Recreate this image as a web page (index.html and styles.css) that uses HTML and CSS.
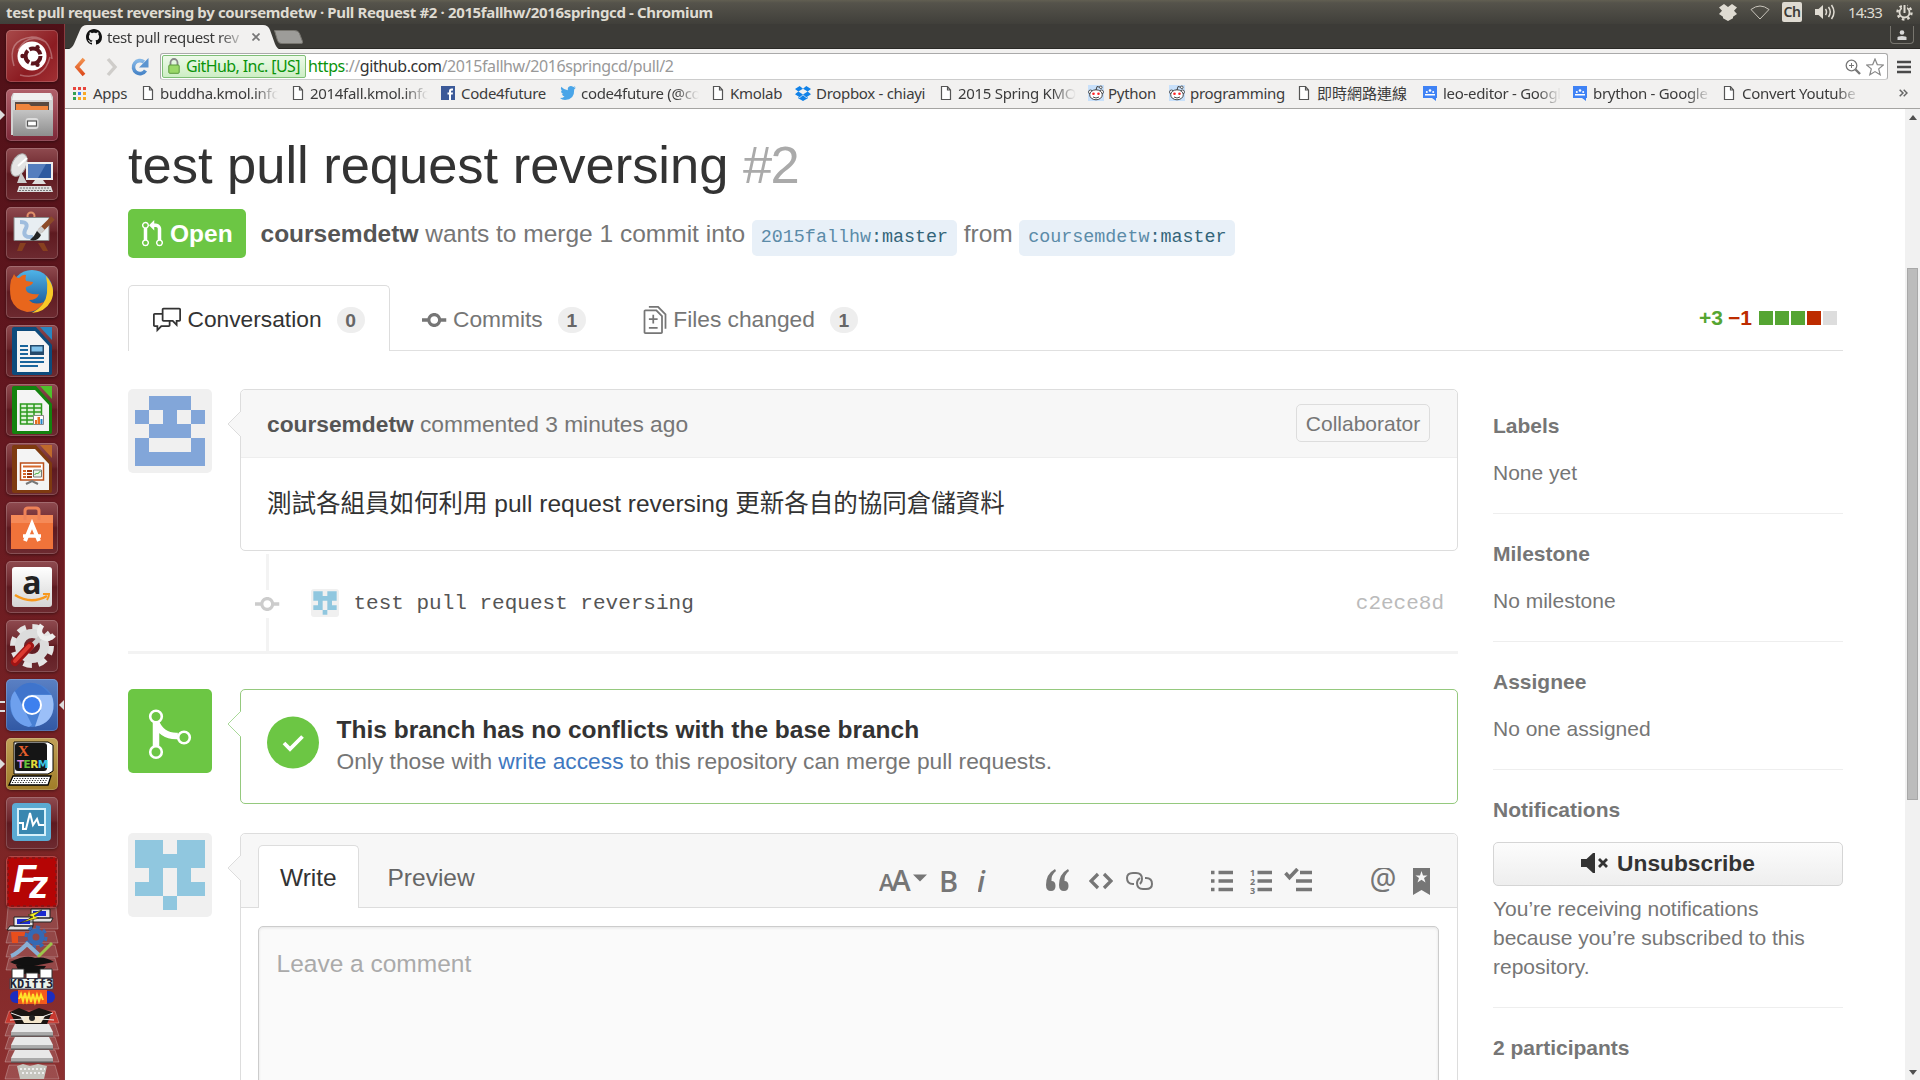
FILE: index.html
```html
<!DOCTYPE html>
<html lang="en">
<head>
<meta charset="utf-8">
<title>test pull request reversing by coursemdetw · Pull Request #2 · 2015fallhw/2016springcd</title>
<link rel="stylesheet" href="styles.css">
</head>
<body>
<svg class="defs" width="0" height="0">
  <defs>
    <linearGradient id="shine" x1="0" y1="0" x2="0" y2="1"><stop offset="0" stop-color="#fff"/><stop offset="1" stop-color="#d5d5d5"/></linearGradient>
    <linearGradient id="steel" x1="0" y1="0" x2="0" y2="1"><stop offset="0" stop-color="#c4c4c4"/><stop offset="1" stop-color="#8e8e8e"/></linearGradient>
    <linearGradient id="blueball" x1="0" y1="0" x2="0" y2="1"><stop offset="0" stop-color="#4fb4e8"/><stop offset="1" stop-color="#134a8e"/></linearGradient>
    <linearGradient id="reloadg" x1="0" y1="0" x2="0" y2="1"><stop offset="0" stop-color="#85b7e6"/><stop offset="1" stop-color="#4a86c8"/></linearGradient>
    <linearGradient id="backg" x1="0" y1="0" x2="0" y2="1"><stop offset="0" stop-color="#f2924f"/><stop offset="1" stop-color="#dc4a1c"/></linearGradient>
    <symbol id="doc" viewBox="0 0 12 16"><path d="M1.500 1.500h6l3 3.500v9.500h-9zM7.500 1.500V5h3" fill="#fff" stroke="#555" stroke-width="1.200"/></symbol>
    <symbol id="reddit" viewBox="0 0 16 16"><path fill="#c8e0fa" d="M0 0h16v16H0z"/><circle cx="2.500" cy="7" r="2" fill="#fff" stroke="#333" stroke-width=".8"/><circle cx="13.500" cy="7" r="2" fill="#fff" stroke="#333" stroke-width=".8"/><ellipse cx="8" cy="9.800" rx="6.300" ry="5" fill="#fff" stroke="#333" stroke-width=".9"/><circle cx="5.500" cy="8.700" r="1.300" fill="#f22"/><circle cx="10.500" cy="8.700" r="1.300" fill="#f22"/><path d="M5 12q3 2 6 0M8 5l1-3.500 3 .8" fill="none" stroke="#333" stroke-width=".9"/><circle cx="12.800" cy="2.300" r="1.300" fill="#fff" stroke="#333" stroke-width=".8"/></symbol>
    <symbol id="groups" viewBox="0 0 14 16"><path fill="#3f82f5" d="M0 1h14v12h-1v3l-4-3H0z"/><path d="M2 9h10v1.500H2z" fill="#fff"/><circle cx="7" cy="5.500" r="1.300" fill="#fff"/><circle cx="3.800" cy="7" r="1" fill="#fff"/><circle cx="10.200" cy="7" r="1" fill="#fff"/></symbol>
    <symbol id="commit" viewBox="0 0 14 16"><path d="M10.860 7c-.45-1.720-2-3-3.860-3-1.860 0-3.410 1.280-3.860 3H0v2h3.140c.45 1.720 2 3 3.860 3 1.860 0 3.410-1.280 3.860-3H14V7h-3.140zM7 10.200c-1.220 0-2.200-.98-2.200-2.200 0-1.220.98-2.200 2.200-2.200 1.220 0 2.200.98 2.200 2.200 0 1.220-.98 2.200-2.200 2.200z"/></symbol>
    <symbol id="teal" viewBox="0 0 84 84"><path fill="#f0f0f0" d="M0 0h84v84H0z"/><path fill="#90c7df" d="M7 7h28v14h14V7h28v28H63v14h14v14H49V35H35v28H7V49h14V35H7zM35 63h14v14H35z"/></symbol>
    <symbol id="drive" viewBox="0 0 44 14"><path fill="#e8e8e8" d="M5 0h34l4 8H1z"/><path fill="#aaa" d="M1 8h42v4H1z"/><path fill="#555" d="M1 11.500h42v1.200H1z"/></symbol>
  </defs>
</svg>

<header class="titlebar">
  <span class="window-title">test pull request reversing by coursemdetw · Pull Request #2 · 2015fallhw/2016springcd - Chromium</span>
  <div class="indicators">
    <svg class="ind-dropbox" width="18" height="17" viewBox="0 0 18 17" fill="#dfdbd2"><path d="M5 0l4 3 4-3 5 3.500-3 3.200 3 3.300-4 2.800v1.500L9 17l-5-2.700v-1.500L0 10l3-3.300-3-3.200z"/></svg>
    <svg class="ind-wifi" width="20" height="15" viewBox="0 0 20 15" fill="none" stroke="#c9c5bc"><path d="M1 4.500Q10-2.500 19 4.500L10 14z"/></svg>
    <span class="ind-ime">Ch</span>
    <svg class="ind-sound" width="21" height="18" viewBox="0 0 21 18"><path fill="#dfdbd2" d="M0 6h3.500L8 2v14l-4.500-4H0z"/><path fill="none" stroke="#dfdbd2" stroke-width="1.500" d="M10.500 6q2 3 0 6M13.500 4q3.500 5 0 10M16.500 2q5 7 0 14"/></svg>
    <span class="clock">14:33</span>
    <svg class="ind-gear" width="17" height="17" viewBox="0 0 17 17" fill="none" stroke="#dfdbd2"><circle cx="8.500" cy="8.500" r="5" stroke-width="1.800"/><circle cx="8.500" cy="8.500" r="7" stroke-width="2.400" stroke-dasharray="2.600 2.900"/><path d="M8.500 0v8" stroke="#504e47" stroke-width="5"/><path d="M8.500 1v8" stroke-width="2"/></svg>
  </div>
</header>

<div class="desktop">
  <nav class="launcher">
    <div class="tile tile-dash"><svg viewBox="0 0 52 52"><g fill="none" stroke="#fff" stroke-opacity=".3" stroke-width="1.500"><path d="M8 36Q0 10 26 7q18 0 20 22M14 45q24 6 30-18M12 20Q22 2 40 12"/></g><circle cx="26" cy="26" r="14.500" fill="#fff"/><circle cx="27" cy="26" r="7.500" fill="none" stroke="#5c141c" stroke-width="4" stroke-dasharray="13.700 2"/><g fill="#5c141c"><circle cx="16.500" cy="26" r="2.200"/><circle cx="31.500" cy="17.200" r="2.200"/><circle cx="31.500" cy="34.800" r="2.200"/></g></svg></div>
    <div class="tile tile-pink running"><svg viewBox="0 0 52 52"><path fill="#d2d2d2" d="M7 4h38l2 4v38H5V8z"/><path fill="#f0f0f0" d="M8 4h36l2 7H6z"/><path fill="#5a4a40" d="M9 13h34v9H9z"/><path fill="#f0853c" d="M10 15h13l2 2h17v5H10z"/><path fill="url(#steel)" d="M7 21h40v26H7z"/><rect x="19.500" y="29" width="13" height="11" rx="3" fill="#ddd"/><rect x="21.500" y="32" width="9" height="5" fill="#fff" stroke="#555" stroke-width="1.200"/></svg></div>
    <div class="tile"><svg viewBox="0 0 52 52"><ellipse cx="13" cy="17" rx="7" ry="12" transform="rotate(25 13 17)" fill="#e4e4e4" stroke="#aaa"/><path stroke="#fff" stroke-width="2" d="M12 18l9-8"/><path fill="#ccc" d="M15 24l6 11H11z"/><path fill="#eee" d="M20 14h27v18H20z"/><path fill="#2d5aa0" d="M22 16h23v14H22z"/><path fill="#7da2dc" d="M22 16h18l-8 14H22z" opacity=".5"/><path fill="#ddd" d="M29 32h8l3 4H26zM13 38h32l2 6H11z"/><path stroke="#777" stroke-dasharray="2 1" d="M14 40h30M13 42.500h32"/></svg></div>
    <div class="tile"><svg viewBox="0 0 52 52"><path fill="#87401f" d="M14 36h6l-4 8h-5zM32 36h6l4 8h-5z"/><circle cx="25" cy="9" r="3.500" fill="none" stroke="#e0906a" stroke-width="2"/><path fill="#e8eef2" stroke="#888" d="M8 10.500h35v23H8z"/><path d="M14 15q10 0 5 8-3 8 8 7" fill="none" stroke="#6e9cd0" stroke-width="4" opacity=".6"/><path stroke="#8c4b28" stroke-width="5" d="M47 11L34 24"/><path stroke="#ccc" stroke-width="5" d="M37 21l-5 5"/><path fill="#222" d="M31 24l4 4q-3 7-11 5 4-3 7-9z"/></svg></div>
    <div class="tile"><svg viewBox="0 0 52 52"><circle cx="26" cy="25" r="21" fill="url(#blueball)"/><path fill="#f9c927" d="M40 10q11 12 5 25-6 11-19 12 14-8 15-20 1-9-1-17z"/><path fill="#e8661c" d="M5 14q2-3 3-6 2 4 5 4 4-4 7-3-1 4 0 6l7 1q0 3-7 5-1 4 3 6 5 2 10 1-2 6-10 6 5 6 15 2-6 10-17 10-12-2-16-13-2-10 0-19z"/></svg></div>
    <div class="tile"><svg viewBox="0 0 52 52"><path fill="#0d4b7c" d="M8 2h22l16 18v28q0 2-2 2H8q-2 0-2-2V4q0-2 2-2z"/><path fill="#2a86c0" d="M34 2h12v13z"/><path fill="#f4f4f4" d="M11 6h18l14 15v26H11z"/><path stroke="#1a659c" stroke-width="1.900" d="M14 21h8M14 25h8M14 29h8M14 33h24M14 37h24M14 41h18"/><path fill="#234a6c" d="M24 20h14v10H24z"/><path fill="#7fc1ea" d="M25.500 21.500h11v5h-11z"/></svg></div>
    <div class="tile"><svg viewBox="0 0 52 52"><path fill="#14820e" d="M8 2h22l16 18v28q0 2-2 2H8q-2 0-2-2V4q0-2 2-2z"/><path fill="#4fc02c" d="M34 2h12v13z"/><path fill="#f4f4f4" d="M11 6h18l14 15v26H11z"/><path fill="#dff2d8" stroke="#2d9a1e" stroke-width="1.500" d="M14.500 20h21v20h-21zM14 24h22M14 28h22M14 32h22M14 36h22M21 20v20M28 20v20"/><path fill="#fff" stroke="#888" d="M27.500 31.500h10v9h-10z"/><path fill="#e56f1c" d="M29 36h2v4h-2z"/><path fill="#e56f1c" d="M31.500 33h2.500v7h-2.500z"/><path fill="#2585c8" d="M34.500 35h2v5h-2z"/></svg></div>
    <div class="tile"><svg viewBox="0 0 52 52"><path fill="#7e3a10" d="M8 2h22l16 18v28q0 2-2 2H8q-2 0-2-2V4q0-2 2-2z"/><path fill="#bf6a2c" d="M34 2h12v13z"/><path fill="#f4f4f4" d="M11 6h18l14 15v26H11z"/><path fill="#fff" stroke="#ba4f1a" stroke-width="1.500" d="M14.500 20h23v17h-23z"/><path stroke="#d6692c" stroke-width="2" d="M17 23.500h18M17 28h3M17 31h3M17 34h3"/><path stroke="#9c3a10" stroke-width="2" d="M21 28h5M21 31h5M21 34h5"/><path fill="#e8f4e8" stroke="#777" d="M27.500 27h8v7h-8z"/><path stroke="#2ea52a" fill="none" d="M28.500 32l2-2 1 1 3-3"/><path stroke="#777" stroke-width="2" fill="none" d="M20 41l6-3 6 3"/></svg></div>
    <div class="tile"><svg viewBox="0 0 52 52"><path fill="#f0733a" d="M5 13h42v34H5z"/><path fill="#f58a58" d="M5 13h42v8H5z"/><path fill="none" stroke="#ee8258" stroke-width="3" d="M19 18V9q0-3 3-3h8q3 0 3 3v9"/><path fill="none" stroke="#fff" stroke-width="4" d="M19 39l7-17 7 17"/><path stroke="#fff" stroke-width="3.500" d="M17 34h18"/></svg></div>
    <div class="tile"><svg viewBox="0 0 52 52"><rect x="6" y="6" width="40" height="40" rx="3" fill="url(#shine)"/><text x="26" y="33" text-anchor="middle" class="amazon-a">a</text><path fill="none" stroke="#f7981d" stroke-width="2.500" d="M9 34q16 10 32 1"/><path fill="none" stroke="#f7981d" stroke-width="2" d="M37 33h6q0 3-2 6"/></svg></div>
    <div class="tile"><svg viewBox="0 0 52 52"><circle cx="26" cy="26" r="18" fill="none" stroke="#e4e4e4" stroke-width="8" stroke-dasharray="8 6.100"/><circle cx="26" cy="26" r="12.500" fill="none" stroke="#dcdcdc" stroke-width="9"/><path d="M19 33L37 15" stroke="#ccc" stroke-width="5"/><path fill="none" stroke="#eee" stroke-width="5" d="M36 5q-5 7 0 12 6 4 12-2"/><path d="M9 42l15-16" stroke="#a01414" stroke-width="8" stroke-linecap="round"/><path d="M9 41l14-15" stroke="#dc3a30" stroke-width="4" stroke-linecap="round"/></svg></div>
    <div class="tile tile-blue running-many active"><svg viewBox="0 0 52 52"><circle cx="26" cy="26" r="22" fill="#4880d4"/><path fill="#6ea0ee" d="M4.500 22Q6 14 9 12l10 20 7 14-3 2Q4 44 4.500 22z"/><path fill="#9bbff8" d="M29 47.500Q48 44 47.500 25q-.5-6-2-9H26l9 14z"/><path fill="#3f74cc" d="M9 12Q25-6 44 15H26q-9 1-10 9z"/><circle cx="26" cy="26" r="10" fill="#fff"/><circle cx="26" cy="26" r="8" fill="#3d80ee"/></svg></div>
    <div class="tile tile-gold running"><svg viewBox="0 0 52 52"><path fill="#fff" stroke="#000" d="M8 4h34l5 3v26l-5 3H8z"/><rect x="9" y="5" width="32" height="28" rx="3" fill="#151515"/><path fill="#fff" stroke="#000" stroke-width="1.300" d="M7 38h38l-3 9H3z"/><path stroke="#222" stroke-dasharray="1.200 1.500" d="M8 40.500h34M7 42.500h34M6 44.500h34"/><text x="12" y="18" class="xterm-x">X</text><text x="11" y="29.500" class="xterm-t"><tspan fill="#e08ad6">T</tspan><tspan fill="#67c23c">E</tspan><tspan fill="#e2dc3c">R</tspan><tspan fill="#3cc6e6">M</tspan></text></svg></div>
    <div class="tile"><svg viewBox="0 0 52 52"><rect x="6" y="6" width="39" height="38" rx="4" fill="#5baad2"/><path fill="#3987b0" stroke="#d6f0fa" stroke-width="2" d="M12 12h27v26H12z"/><path fill="none" stroke="#fff" stroke-width="2" d="M13 26h4v6h3l4-16 3 12 4-6 2 6h5"/></svg></div>
    <div class="tile tile-fz"><svg viewBox="0 0 52 52"><rect x="2" y="2" width="48" height="48" fill="#b50505" stroke="#8c1414" stroke-width="2" stroke-dasharray="3 3"/><text x="7" y="36" class="fz">F<tspan dx="-7" dy="6">z</tspan></text></svg></div>
    <svg class="stack" width="64" height="174" viewBox="0 0 64 174">
      <g fill="#fff" fill-opacity=".14" stroke="#fff" stroke-opacity=".25"><path d="M8 0h48l2 22H6z"/><path d="M9 24h46l3 12H6zM9 38h46l3 12H6zM9 51h46l3 12H6z"/><path d="M9 104h46l4 12H5z" fill="#f04030" fill-opacity=".6"/><path d="M9 117h46l4 12H5zM9 130h46l4 12H5zM9 143h46l4 12H5zM9 158h46l4 14H5z"/></g>
      <path fill="#e6e6e6" stroke="#222" d="M31 2h19v9H31zM30 11h23l-2 4H28zM14 10h19v9H14zM10 19h23l-2 4H7z"/><path fill="#1b2bd0" d="M33 4h13v5H33zM17 12h13v5H17z"/><path fill="#f4ee20" stroke="#222" stroke-width=".6" d="M42 3L28 8l5 2-13 6 19-5-5-2z"/>
      <path fill="#e84e1c" d="M11 25h14v4h-7v7h-6z"/><circle cx="36" cy="30" r="6" fill="none" stroke="#3469b4" stroke-width="5"/><circle cx="36" cy="30" r="10" fill="none" stroke="#3469b4" stroke-width="3" stroke-dasharray="4 3.800"/>
      <path d="M11 49q6-2 16-12l12 11" fill="none" stroke="#8ab0d4" stroke-width="4"/><path stroke="#9cc44a" stroke-width="3" d="M52 36L38 50"/><path fill="#111" d="M10 55q16-8 25-4 10-2 19 4-16 3-25 5-12-1-19-5z"/>
      <path fill="#111" d="M16 58l30 1-6 8H20z"/><path fill="#fff" stroke="#333" d="M12 62h12v9H12zM26 66h12v6H26zM40 62h12v9H40z"/><path fill="#eaf2ea" stroke="#445" d="M10 71.500h43V82H10z"/><text x="31.500" y="81" text-anchor="middle" class="kdiff">KDiff3</text>
      <rect x="10" y="84" width="45" height="12" rx="6" fill="#1c2cc0"/><path fill="#f35a1c" d="M18 83h29v14H18z"/><path stroke="#ffe22a" stroke-width="2" fill="none" d="M19 92l2-5 2 7 2-8 2 8 2-7 2 8 2-8 2 8 2-7 2 6 2-6 2 5"/>
      <path fill="#1a1512" d="M10 105l9-4 10 4 10-4 13 4-5 12H16z"/><path fill="#f4e6cc" d="M20 109h25l-4 7H24z"/><path stroke="#eee" d="M11 106l14 5M53 106l-14 5M10 113l14-1M54 113l-14-1"/><circle cx="32" cy="111" r="3" fill="#222"/>
      <use href="#drive" x="9" y="117" width="46" height="14"/><use href="#drive" x="9" y="130" width="46" height="14"/><use href="#drive" x="9" y="143" width="46" height="14"/>
      <path fill="#c6c6bf" d="M17 159l6-2 7 2 8-2 9 2-3 13H20z"/><path stroke="#eee" stroke-dasharray="2 2" stroke-width="2" d="M20 162h25M22 166h22"/>
    </svg>
  </nav>

  <div class="browser">
    <div class="tabstrip">
      <svg class="tab-shape" width="245" height="25" viewBox="0 0 245 25"><path fill="#f2f1f0" d="M0 25q6-1 8-6l6-14q2-5 7-5h176q5 0 7 5l5 14q2 5 6 6z"/><path fill="#9d9c99" stroke="#77756f" d="M208.500 5.500h20q4 0 5 3l3 8q1 2-2 2h-19q-3 0-4-3z"/></svg>
      <div class="tab">
        <svg width="16" height="16" viewBox="0 0 16 16"><path fill="#111" d="M8 0C3.580 0 0 3.580 0 8c0 3.540 2.290 6.530 5.470 7.590.4.07.55-.17.55-.38 0-.19-.01-.82-.01-1.490-2.010.37-2.530-.49-2.690-.94-.09-.23-.48-.94-.82-1.130-.28-.15-.68-.52-.01-.53.63-.01 1.080.58 1.230.82.72 1.210 1.870.87 2.330.66.07-.52.28-.87.51-1.070-1.780-.2-3.640-.89-3.640-3.950 0-.87.31-1.590.82-2.150-.08-.2-.36-1.020.08-2.120 0 0 .67-.21 2.200.82.64-.18 1.320-.27 2-.27.68 0 1.360.09 2 .27 1.530-1.040 2.200-.82 2.200-.82.44 1.100.16 1.920.08 2.120.51.56.82 1.270.82 2.150 0 3.070-1.870 3.750-3.650 3.950.29.25.54.73.54 1.480 0 1.070-.01 1.930-.01 2.200 0 .21.15.46.55.38A8.013 8.013 0 0 0 16 8c0-4.420-3.580-8-8-8z"/></svg>
        <span class="tab-title">test pull request rev</span>
        <svg width="8" height="8" viewBox="0 0 8 8"><path d="M.5.5l7 7M7.500.5l-7 7" stroke="#777" stroke-width="1.700"/></svg>
      </div>
      <div class="profile"><svg width="10" height="10" viewBox="0 0 10 10" fill="#d8d8d8"><circle cx="5" cy="2.500" r="2.300"/><path d="M.5 10V7.500Q1 6 5 6t4.500 1.500V10z"/></svg></div>
    </div>

    <div class="toolbar">
      <svg class="nav-back" width="12" height="20" viewBox="0 0 12 20"><path d="M10 2L3 10l7 8" fill="none" stroke="url(#backg)" stroke-width="3.600"/></svg>
      <svg class="nav-fwd" width="12" height="20" viewBox="0 0 12 20"><path d="M2 2l7 8-7 8" fill="none" stroke="#cfcdca" stroke-width="3.400"/></svg>
      <svg class="nav-reload" width="18" height="20" viewBox="0 0 18 20"><path d="M14.500 13.500A6.500 6.500 0 1 1 13 5" fill="none" stroke="url(#reloadg)" stroke-width="3.600"/><path fill="#5a94d0" d="M17.500 1v9.500H8z"/></svg>
      <div class="omnibox">
        <div class="ev"><svg width="12" height="16" viewBox="0 0 12 16"><path d="M2.500 8V4.500a3.500 3.500 0 0 1 7 0V8" fill="none" stroke="#888" stroke-width="1.800"/><rect x=".8" y="7" width="10.400" height="8.300" rx="1" fill="#9ad868" stroke="#5a9a3c"/></svg><span>GitHub, Inc. [US]</span></div>
        <div class="url"><span class="scheme">https</span>://<span class="host">github.com</span>/2015fallhw/2016springcd/pull/2</div>
        <svg class="magnify" width="16" height="16" viewBox="0 0 16 16" fill="none" stroke="#777"><circle cx="6.500" cy="6.500" r="5.300" stroke-width="1.300"/><path d="M4 6.500h5M6.500 4v5"/><path d="M10.500 10.500l4.500 4.500" stroke-width="2.400"/></svg>
        <svg width="18" height="18" viewBox="0 0 18 18"><path d="M9 1l2.300 5.600 6 .4-4.600 3.900 1.500 5.900L9 13.600l-5.200 3.200 1.500-5.900L.7 7l6-.4z" fill="#fff" stroke="#888" stroke-width="1.200"/></svg>
      </div>
      <svg class="menu" width="14" height="14" viewBox="0 0 14 14"><path stroke="#4a4a4a" stroke-width="2.600" d="M0 2h14M0 7h14M0 12h14"/></svg>
    </div>

    <div class="bookmarks">
      <div class="bm bm-apps"><svg width="13" height="13" viewBox="0 0 13 13"><path fill="#e8453c" d="M0 0h3v3H0zM5 0h3v3H5zM10 0h3v3h-3z"/><path fill="#33a152" d="M0 5h3v3H0zM0 10h3v3H0z"/><path fill="#4285f4" d="M5 5h3v3H5z"/><path fill="#f9a825" d="M10 5h3v3h-3zM5 10h3v3H5zM10 10h3v3h-3z"/></svg><span>Apps</span></div>
      <div class="bm bm-buddha"><svg width="12" height="16"><use href="#doc"/></svg><span class="fade">buddha.kmol.info</span></div>
      <div class="bm bm-fall"><svg width="12" height="16"><use href="#doc"/></svg><span class="fade">2014fall.kmol.info</span></div>
      <div class="bm bm-code"><svg width="14" height="14" viewBox="0 0 14 14"><path fill="#3b5998" d="M0 0h14v14H0z"/><path fill="#fff" d="M8 14V8.500H6.500V6.500H8V5q0-2.500 2.500-2.500H12v2h-1q-1 0-1 1v1h2l-.3 2H10V14z"/></svg><span>Code4future</span></div>
      <div class="bm bm-twitter"><svg width="16" height="14" viewBox="0 0 16 14"><path fill="#4aa5e8" d="M0 12q3 0 4.500-1.500Q2.500 10 2 8h1.300Q.8 7 1 4.500l1.300.5Q0 3 1.200.8 4 4 7.800 4.200 7.300.5 10.700 0q1.600 0 2.600 1l2-.7-1.200 1.800 1.900-.5-1.800 2Q14.500 14 5 14q-3 0-5-2z"/></svg><span class="fade">code4future (@co</span></div>
      <div class="bm bm-kmolab"><svg width="12" height="16"><use href="#doc"/></svg><span>Kmolab</span></div>
      <div class="bm bm-dropbox"><svg width="16" height="15" viewBox="0 0 16 15" fill="#1182e8"><path d="M4.700 0L8 2.700 3.300 5.600 0 3zM11.300 0L16 3l-3.300 2.600L8 2.700zM3.300 5.600L8 8.500l-3.300 2.700L0 8.200zM12.700 5.600L16 8.200l-4.700 3L8 8.500zM8 9.300l3.300 2.700 1.500-1v1.200L8 15l-4.800-2.800V11l1.500 1z"/></svg><span>Dropbox - chiayi</span></div>
      <div class="bm bm-spring"><svg width="12" height="16"><use href="#doc"/></svg><span class="fade">2015 Spring KMO</span></div>
      <div class="bm bm-python"><svg width="16" height="16"><use href="#reddit"/></svg><span>Python</span></div>
      <div class="bm bm-prog"><svg width="16" height="16"><use href="#reddit"/></svg><span>programming</span></div>
      <div class="bm bm-cjk"><svg width="12" height="16"><use href="#doc"/></svg><span>即時網路連線</span></div>
      <div class="bm bm-leo"><svg width="14" height="16"><use href="#groups"/></svg><span class="fade">leo-editor - Googl</span></div>
      <div class="bm bm-bry"><svg width="14" height="16"><use href="#groups"/></svg><span class="fade">brython - Google</span></div>
      <div class="bm bm-conv"><svg width="12" height="16"><use href="#doc"/></svg><span class="fade">Convert Youtube</span></div>
      <svg class="more" width="9" height="8" viewBox="0 0 9 8"><path d="M.7.7L4 4 .7 7.300M4.700.7L8 4 4.700 7.300" fill="none" stroke="#666" stroke-width="1.500"/></svg>
    </div>

    <div class="viewport">
      <main class="page">
        <h1 class="pr-title">test pull request reversing <span>#2</span></h1>
        <div class="pr-meta">
          <div class="state"><svg width="21" height="28" viewBox="0 0 12 16" fill="#fff"><path d="M11 11.280V5c-.03-.78-.34-1.470-.94-2.060C9.460 2.350 8.780 2.030 8 2H7V0L4 3l3 3V4h1c.27.02.48.11.69.31.21.2.3.42.31.69v6.280A1.993 1.993 0 0 0 10 15a1.993 1.993 0 0 0 1-3.720zm-1 2.920c-.66 0-1.200-.55-1.200-1.200 0-.65.55-1.200 1.200-1.200.65 0 1.200.55 1.200 1.200 0 .65-.55 1.200-1.200 1.200zM4 3c0-1.110-.89-2-2-2a1.993 1.993 0 0 0-1 3.720v6.560A1.993 1.993 0 0 0 2 15a1.993 1.993 0 0 0 1-3.720V4.720c.59-.34 1-.98 1-1.720zm-.8 10c0 .66-.55 1.200-1.200 1.200-.65 0-1.200-.55-1.200-1.200 0-.65.55-1.200 1.200-1.200.65 0 1.200.55 1.200 1.200zM2 4.200C1.340 4.200.8 3.650.8 3c0-.65.55-1.200 1.200-1.200.65 0 1.200.55 1.200 1.200 0 .65-.55 1.200-1.200 1.200z"/></svg>Open</div>
          <p><b>coursemdetw</b> wants to merge 1 commit into <span class="ref"><i>2015fallhw</i>:master</span> from <span class="ref"><i>coursemdetw</i>:master</span></p>
        </div>

        <div class="tabs">
          <a class="pr-tab selected"><svg width="28" height="28" viewBox="0 0 16 16"><path d="M15 1H6c-.55 0-1 .45-1 1v2H1c-.55 0-1 .45-1 1v6c0 .55.45 1 1 1h1v3l3-3h4c.55 0 1-.45 1-1V9h1l3 3V9h1c.55 0 1-.45 1-1V2c0-.55-.45-1-1-1zM9 11H4.500L3 12.500V11H1V5h4v3c0 .55.45 1 1 1h3v2zm6-3h-2v1.500L11.500 8H6V2h9v6z"/></svg><span>Conversation</span><b class="counter">0</b></a>
          <a class="pr-tab"><svg width="24.500" height="28"><use href="#commit"/></svg><span>Commits</span><b class="counter">1</b></a>
          <a class="pr-tab"><svg width="24" height="28" viewBox="0 0 13 16"><path d="M6 7h2v1H6v2H5V8H3V7h2V5h1v2zm-3 6h5v-1H3v1zM7.500 2L11 5.500V15c0 .55-.45 1-1 1H1c-.55 0-1-.45-1-1V3c0-.55.45-1 1-1h6.500zM10 6L7 3H1v12h9V6zM8.500 0H3v1h5l4 4v8h1V4.500L8.500 0z"/></svg><span>Files changed</span><b class="counter">1</b></a>
          <div class="diffstat"><span class="add">+3</span> <span class="del">−1</span><i class="blk g"></i><i class="blk g"></i><i class="blk g"></i><i class="blk r"></i><i class="blk"></i></div>
        </div>

        <div class="columns">
          <section class="discussion">
            <article class="entry">
              <svg class="avatar" width="84" height="84" viewBox="0 0 84 84"><path fill="#f0f0f0" d="M0 0h84v84H0z"/><path fill="#82a6d9" fill-rule="evenodd" d="M21 7h42v14h14v14H63v14H21V35H7V21h14zM21 21v14h14V21zM49 21v14h14V21zM7 49h14v14h42V49h14v28H7z"/></svg>
              <div class="box comment">
                <svg class="caret" width="14" height="28" viewBox="0 0 14 28"><path d="M14 1L1 14l13 13" fill="#f7f7f7" stroke="#ddd"/></svg>
                <header><span><b>coursemdetw</b> commented 3 minutes ago</span><span class="role">Collaborator</span></header>
                <p>測試各組員如何利用 pull request reversing 更新各自的協同倉儲資料</p>
              </div>
            </article>
            <div class="commit-row">
              <div class="rail"><i class="seg-top"></i><svg width="24.500" height="28" fill="#ccc"><use href="#commit"/></svg><i class="seg-bottom"></i></div>
              <svg class="mini" width="28" height="28"><use href="#teal"/></svg>
              <code>test pull request reversing</code>
              <code class="sha">c2ece8d</code>
            </div>
            <article class="entry merge">
              <div class="avatar merge-icon"><svg width="84" height="84" viewBox="0 0 84 84" fill="none" stroke="#fff"><path d="M28 33v25M28 33q6 15 22 14" stroke-width="6.500"/><g fill="#6cc644" stroke-width="2.600"><circle cx="28" cy="27.500" r="5.800"/><circle cx="28" cy="63" r="5.800"/><circle cx="56" cy="48.500" r="5.800"/></g></svg></div>
              <div class="box merge-box">
                <svg class="caret" width="14" height="28" viewBox="0 0 14 28"><path d="M14 1L1 14l13 13" fill="#fff" stroke="#a9d999"/></svg>
                <svg class="ok" width="52" height="53" viewBox="0 0 52 52"><circle cx="26" cy="26" r="26" fill="#6cc644"/><path d="M17 26.500l6 6L35.500 20" fill="none" stroke="#fff" stroke-width="3.800"/></svg>
                <div class="merge-text"><strong>This branch has no conflicts with the base branch</strong><span>Only those with <a>write access</a> to this repository can merge pull requests.</span></div>
              </div>
            </article>
            <article class="entry form">
              <svg class="avatar" width="84" height="84"><use href="#teal"/></svg>
              <div class="box editor">
                <svg class="caret" width="14" height="28" viewBox="0 0 14 28"><path d="M14 1L1 14l13 13" fill="#f7f7f7" stroke="#ddd"/></svg>
                <header>
                  <span class="write">Write</span><span class="preview">Preview</span>
                  <div class="tools">
                    <svg class="t-head" width="48" height="28" viewBox="0 0 48 28"><text x="0" y="23" class="ico-a small-a">A</text><text x="12.500" y="23" class="ico-a">A</text><path d="M34 6.500h14l-7 7z"/></svg>
                    <svg class="t-bold" width="17" height="28" viewBox="0 0 17 28"><text x="-1" y="23.500" class="ico-b">B</text></svg>
                    <svg class="t-ital" width="9" height="28" viewBox="0 0 9 28"><text x="-1" y="23.500" class="ico-i">i</text></svg>
                    <svg class="t-quote" width="24" height="28" viewBox="0 0 24 28"><path d="M9 1Q0 6 0 17q0 6 5 6 4.500 0 4.500-5t-4-5Q5 7 10 3z"/><path d="M22 1Q13 6 13 17q0 6 5 6 4.500 0 4.500-5t-4-5Q18 7 23 3z"/></svg>
                    <svg class="t-code" width="24" height="28" viewBox="0 0 24 28"><path d="M9 6L2 13l7 7M15 6l7 7-7 7" fill="none" stroke="#767676" stroke-width="3.300"/></svg>
                    <svg class="t-link" width="27" height="28" viewBox="0 0 27 28"><path d="M8 16H7Q1 16 1 10q0-5 6-5h3q6 0 6 6 0 3-2 5M19 10h1q6 0 6 6 0 5-6 5h-3q-6 0-6-6 0-3 3-5" fill="none" stroke="#767676" stroke-width="2"/></svg>
                    <svg class="t-ul" width="22" height="28" viewBox="0 0 22 28"><path d="M0 4.500h3.500M7.500 4.500H22M0 13h3.500M7.500 13H22M0 21.500h3.500M7.500 21.500H22" stroke="#767676" stroke-width="3.500"/></svg>
                    <svg class="t-ol" width="22" height="28" viewBox="0 0 22 28"><path d="M7.500 4.500H22M7.500 13H22M7.500 21.500H22" stroke="#767676" stroke-width="3.500"/><g class="ico-n"><text x="0" y="7.500">1</text><text x="0" y="16.500">2</text><text x="0" y="25.500">3</text></g></svg>
                    <svg class="t-task" width="28" height="28" viewBox="0 0 28 28"><path d="M16 4.500h12M12 13h16M12 21.500h16" stroke="#767676" stroke-width="3.500"/><path d="M1.500 5l4 4.500L13.500 1" fill="none" stroke="#767676" stroke-width="3.600"/></svg>
                    <svg class="t-at" width="25" height="28" viewBox="0 0 25 28"><text x="-1.500" y="21" class="ico-at">@</text></svg>
                    <svg class="t-book" width="17" height="28" viewBox="0 0 17 28"><path fill-rule="evenodd" d="M0 0h17v27l-8.500-5L0 27zM8.500 3L7 7.500H2.500L6 10l-1.500 4.500 4-2.700 4 2.700L11 10l3.500-2.500H10z"/></svg>
                  </div>
                </header>
                <div class="textarea">Leave a comment</div>
              </div>
            </article>
          </section>

          <aside class="side">
            <div class="side-item"><h3>Labels</h3><p>None yet</p></div>
            <div class="side-item"><h3>Milestone</h3><p>No milestone</p></div>
            <div class="side-item"><h3>Assignee</h3><p>No one assigned</p></div>
            <div class="side-item"><h3>Notifications</h3>
              <div class="btn"><svg width="28" height="22" viewBox="0 0 28 22"><path fill="#333" d="M0 7h5.500L12 1h2v20h-2l-6.500-6H0z"/><path d="M18 7l8 8M26 7l-8 8" stroke="#333" stroke-width="2.800"/></svg>Unsubscribe</div>
              <p class="why">You’re receiving notifications because you’re subscribed to this repository.</p></div>
            <div class="side-item"><h3>2 participants</h3></div>
          </aside>
        </div>
      </main>
      <div class="scrollbar"><i class="up"></i><i class="thumb"></i><i class="down"></i></div>
    </div>
  </div>
</div>
</body>
</html>
```
FILE: styles.css
```css
* { box-sizing: border-box; }
body { margin: 0; width: 1920px; height: 1080px; overflow: hidden; background: #fff; font-family: "Liberation Sans", "Noto Sans CJK TC", sans-serif; }
h1, h3, p { margin: 0; font-weight: normal; }
i { font-style: normal; }
svg { display: block; flex: none; }
.defs { position: absolute; }

/* system bar */
.titlebar { height: 24px; display: flex; align-items: center; justify-content: space-between; padding: 0 7px 0 6px; background: linear-gradient(#625f52, #55534b 12%, #403f3a); color: #dfdbd2; font-family: "Noto Sans", sans-serif; }
.window-title { font-size: 15px; font-weight: 700; letter-spacing: -.36px; line-height: 20px; padding-bottom: 1px; white-space: nowrap; }
.indicators { display: flex; align-items: center; }
.ind-wifi { margin-left: 13px; }
.ind-ime { margin-left: 12px; width: 20px; height: 20px; border-radius: 2px; background: #dfdbd2; color: #3c3b37; font-size: 14px; line-height: 20px; text-align: center; letter-spacing: -.5px; font-weight: 600; }
.ind-sound { margin-left: 13px; }
.clock { margin-left: 12px; width: 36px; font-size: 15px; letter-spacing: -.9px; white-space: nowrap; }
.ind-gear { margin-left: 12px; }

.desktop { display: flex; height: 1056px; }

/* launcher */
.launcher { width: 65px; flex: none; padding: 6px 0 0 6px; display: flex; flex-direction: column; gap: 7px; background: linear-gradient(#4f1017, #651820 40%, #7e2626 80%, #8c3030); border-right: 1px solid #8a3c40; overflow: hidden; position: relative; }
.tile { position: relative; width: 52px; height: 52px; flex: none; border-radius: 5px; background: linear-gradient(#8f4b50, #6b252b 45%, #5e1a20 50%, #6d2a30); box-shadow: inset 0 0 0 1px rgba(255,255,255,.18), 0 1px 3px rgba(0,0,0,.4); }
.tile svg { width: 52px; height: 52px; }
.tile-dash { background: linear-gradient(135deg, #a84a4a, #8c1c22 60%, #a23034); }
.tile-pink { background: linear-gradient(#b0606a, #7c2838); }
.tile-blue { background: linear-gradient(#5a80c4, #3158a4); }
.tile-gold { background: linear-gradient(#c0a058, #a07c28); }
.tile-fz { background: #a42020; }
.running::before { content: ""; position: absolute; left: -6px; top: 21px; border: 5px solid transparent; border-left-color: #ddd; border-right: 0; }
.running-many::before { content: ""; position: absolute; left: -6px; top: 22px; width: 5px; height: 7px; border: solid #ddd; border-width: 2px 0; }
.active::after { content: ""; position: absolute; right: -6px; top: 21px; border: 5px solid transparent; border-right-color: #ddd; border-left: 0; }
.amazon-a { font: bold 32px "Open Sans", sans-serif; fill: #222; }
.xterm-x { font: bold 15px "Liberation Serif", serif; fill: #e8602c; }
.xterm-t { font: bold 10.500px "DejaVu Sans", sans-serif; letter-spacing: -.6px; }
.fz { font: italic bold 38px "Liberation Sans", sans-serif; fill: #fff; }
.kdiff { font: bold 12px "DejaVu Sans Mono", monospace; fill: #223; }
.stack { margin: -8px 0 0 -6px; }

/* browser chrome */
.browser { flex: 1; min-width: 0; display: flex; flex-direction: column; font-family: "Noto Sans", "Noto Sans CJK TC", sans-serif; }
.tabstrip { position: relative; height: 25px; background: #3c3b37; border-bottom: 1px solid #2a2926; display: flex; justify-content: space-between; padding: 0 6px 0 21px; }
.tab-shape { position: absolute; left: 1px; top: 1px; }
.tab { position: relative; display: flex; align-items: center; height: 24px; padding-top: 1px; gap: 5px; }
.tab-title { width: 140px; overflow: hidden; white-space: nowrap; font-size: 15px; line-height: 20px; letter-spacing: -.4px; color: #3a3a3a; -webkit-mask: linear-gradient(90deg, #000 80%, transparent); mask: linear-gradient(90deg, #000 80%, transparent); }
.profile { margin-top: 2px; width: 24px; height: 18px; border: 1px solid #77756e; border-top: 0; border-radius: 0 0 4px 4px; display: flex; align-items: center; justify-content: center; }
.toolbar { height: 32px; background: #f2f1f0; display: flex; align-items: center; padding: 3px 9px 0 9px; }
.nav-fwd { margin-left: 20px; }
.nav-reload { margin-left: 13px; }
.omnibox { margin: 0 9px 0 11px; flex: 1; height: 27px; border: 1px solid #aaa; border-bottom-color: #ccc; border-radius: 3px; background: #fff; display: flex; align-items: center; padding: 0 3px 0 1px; font-size: 16px; line-height: 22px; white-space: nowrap; }
.ev { width: 144px; height: 23px; border: 1px solid #7fbf77; border-radius: 2px; background: linear-gradient(#eefaea, #cdeec4); display: flex; align-items: center; gap: 6px; padding: 0 0 1px 5px; color: #0a930a; letter-spacing: -.6px; }
.url { flex: 1; padding: 0 0 1px 2px; color: #999; letter-spacing: -.42px; }
.scheme { color: #0a930a; }
.host { color: #333; }
.magnify { margin-right: 5px; }
.bookmarks { height: 28px; background: #f2f1f0; border-bottom: 1px solid #a5a4a2; display: flex; align-items: center; padding: 0 12px 3px 8px; color: #3c3c3c; font-size: 15px; letter-spacing: -.3px; }
.bm { flex: none; display: flex; align-items: center; gap: 6px; white-space: nowrap; line-height: 20px; }
.bm .fade { width: 118px; overflow: hidden; -webkit-mask: linear-gradient(90deg, #000 80%, transparent); mask: linear-gradient(90deg, #000 80%, transparent); }
.bm-apps { width: 69px; gap: 7px; }
.bm-buddha { width: 150px; }
.bm-fall { width: 149px; }
.bm-code { width: 119px; }
.bm-twitter { width: 152px; gap: 5px; }
.bm-kmolab { width: 83px; }
.bm-dropbox { width: 145px; gap: 5px; }
.bm-spring { width: 148px; }
.bm-python { width: 81px; gap: 4px; }
.bm-prog { width: 129px; gap: 5px; }
.bm-cjk { width: 125px; gap: 7px; }
.bm-leo { width: 150px; }
.bm-bry { width: 150px; }
.bm-conv { width: 150px; gap: 7px; }
.bm-cjk span { letter-spacing: 0; font-size: 15px; }
.more { margin-left: auto; }

/* page */
.viewport { flex: 1; min-height: 0; display: flex; font-family: "Liberation Sans", "Noto Sans CJK TC", sans-serif; background: #fff; overflow: hidden; }
.page { flex: 1; padding: 27px 62px 0 63px; color: #767676; }
.pr-title { font-size: 52.500px; line-height: 58px; color: #333; white-space: nowrap; letter-spacing: -.03px; }
.pr-title span { color: #aaa; letter-spacing: -1.500px; }
.pr-meta { margin-top: 15px; height: 49px; display: flex; gap: 14.500px; font-size: 24.500px; line-height: 49px; white-space: nowrap; }
.pr-meta b, .comment b { color: #555; }
.state { width: 118px; display: flex; align-items: center; gap: 7px; padding-left: 14px; border-radius: 5px; background: #6cc644; color: #fff; font-weight: 700; }
.ref { display: inline-block; height: 36px; padding: 0 8.750px; border-radius: 5px; background: #e8f0f8; color: #336479; font: 18.375px/36px "Liberation Mono", monospace; }
.ref i { color: #5b8ba8; }
.tabs { margin-top: 27px; height: 66px; border-bottom: 1px solid #e0e0e0; display: flex; align-items: stretch; font-size: 22.750px; }
.pr-tab { height: 66px; padding: 2px 24px 0; margin-right: 7px; border: 1px solid transparent; border-bottom: 0; display: flex; align-items: center; fill: #767676; white-space: nowrap; }
.pr-tab.selected { width: 262px; border-color: #ddd; border-radius: 5px 5px 0 0; background: #fff; color: #333; fill: #333; }
.pr-tab span { margin: 0 15px 0 6.500px; }
.counter { height: 26px; min-width: 28px; border-radius: 13px; background: #eee; color: #666; font-size: 19.250px; line-height: 27px; text-align: center; }
.diffstat { margin-left: auto; padding: 0 6px 0 0; display: flex; align-items: center; font-size: 21px; font-weight: 700; line-height: 30px; }
.add { color: #55a532; margin-right: 5px; }
.del { color: #bd2c00; margin-right: 6px; }
.blk { width: 14px; height: 14px; margin-left: 2px; background: #ddd; }
.del + .blk { margin-left: 1px; }
.g { background: #55a532; }
.r { background: #bd2c00; }

.columns { margin-top: 38px; display: grid; grid-template-columns: 1330px 350px; gap: 35px; }
.entry { display: flex; gap: 28px; }
.avatar { width: 84px; height: 84px; flex: none; border-radius: 5px; overflow: hidden; }
.box { position: relative; flex: 1; border: 1px solid #ddd; border-radius: 5px; background: #fff; }
.caret { position: absolute; left: -14px; top: 20px; }
.comment { height: 162px; }
.comment header { height: 68px; padding: 1px 27px 0 26px; display: flex; align-items: center; justify-content: space-between; border-bottom: 1px solid #eee; border-radius: 5px 5px 0 0; background: #f7f7f7; font-size: 22.750px; }
.role { height: 38px; width: 134px; margin-bottom: 3px; border: 1px solid #ddd; border-radius: 5px; font-size: 21px; line-height: 37px; text-align: center; }
.comment p { padding-left: 26px; font-size: 24.500px; line-height: 92px; color: #333; white-space: nowrap; }
.commit-row { height: 103px; border-bottom: 3px solid #f3f3f3; padding: 0 14px 0 127px; display: flex; align-items: center; }
.commit-row code { font: 21px/29px "Liberation Mono", monospace; color: #555; margin: 5px 0 0 15px; }
.commit-row .sha { margin-left: auto; color: #bbb; }
.rail { height: 100px; padding-top: 3px; display: flex; flex-direction: column; align-items: center; }
.seg-top, .seg-bottom { width: 3px; height: 36px; background: #f3f3f3; }
.seg-bottom { height: 33px; }
.mini { margin: 4px 0 0 31px; border-radius: 3px; overflow: hidden; }
.merge { margin-top: 35px; }
.merge-icon { background: #6cc644; }
.merge-box { height: 115px; border-color: #95c97e; display: flex; padding: 24px 26px; gap: 17.500px; }
.ok { margin-top: 2px; }
.merge-text { display: flex; flex-direction: column; font-size: 22.750px; line-height: 31.500px; }
.merge-text strong { font-size: 24.500px; color: #333; }
.merge-text a { color: #4078c0; }
.form { margin-top: 29px; }
.editor { height: 300px; }
.editor header { height: 74px; border-bottom: 1px solid #ddd; border-radius: 5px 5px 0 0; background: #f7f7f7; display: flex; padding: 11px 27px 0 17px; font-size: 24.500px; line-height: 65px; color: #666; }
.write { height: 63px; width: 101px; padding-left: 21px; border: 1px solid #ddd; border-bottom: 0; border-radius: 5px 5px 0 0; background: #fff; color: #333; line-height: 63px; }
.preview { margin-left: 28.500px; }
.tools { margin-left: auto; display: flex; height: 28px; margin-top: 23px; fill: #767676; line-height: 1; }
.t-bold { margin-left: 13px; }
.t-ital { margin-left: 21px; }
.t-quote { margin-left: 59px; }
.t-code { margin-left: 19px; }
.t-link { margin-left: 13px; }
.t-ul { margin-left: 58px; }
.t-ol { margin-left: 17px; }
.t-task { margin-left: 12px; }
.t-at { margin-left: 59px; }
.t-book { margin-left: 17px; }
.ico-a { font: 600 29px "Open Sans", sans-serif; }
.small-a { font-size: 23px; }
.ico-b { font: 600 29px "Open Sans", sans-serif; }
.ico-i { font: italic 600 29px "Open Sans", sans-serif; }
.ico-n { font: 700 9px "Open Sans", sans-serif; }
.ico-at { font: 30px "Noto Sans", sans-serif; }
.textarea { margin: 18px 18px 0 17px; height: 220px; border: 1px solid #ccc; border-radius: 5px; background: #fafafa; box-shadow: inset 0 1px 3px rgba(0,0,0,.09); padding: 18px 17.500px; font-size: 24.500px; line-height: 38px; color: #aaa; }

.side { margin-top: -3px; font-size: 21px; line-height: 29px; }
.side-item { border-bottom: 1px solid #eee; padding: 25px 0 26px; }
.side h3 { font-size: 21px; font-weight: 700; margin-bottom: 18px; }
.btn { height: 44px; padding-bottom: 2px; border: 1px solid #d5d5d5; border-radius: 5px; background: linear-gradient(#fcfcfc, #eee); display: flex; align-items: center; justify-content: center; gap: 8px; color: #333; font-size: 22.750px; font-weight: 700; }
.why { margin-top: 8px; }

.scrollbar { width: 15px; background: #f1f1f1; display: flex; flex-direction: column; align-items: center; padding: 6px 0 5px; }
.up { border: 4px solid transparent; border-top: 0; border-bottom: 5px solid #505050; }
.thumb { width: 11px; height: 532px; margin-top: 148px; background: #bcbcbc; border: 1px solid #a8a8a8; }
.down { margin-top: auto; border: 4px solid transparent; border-bottom: 0; border-top: 5px solid #505050; }
```
